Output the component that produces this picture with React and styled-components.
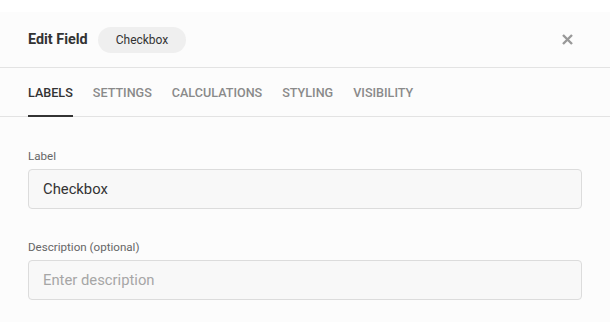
import React from "react";
import styled, { createGlobalStyle } from "styled-components";

const Global = createGlobalStyle`
  html, body { margin: 0; padding: 0; background: #ffffff; }
  body { font-family: Roboto, "Noto Sans", Arial, sans-serif; }
  * { box-sizing: border-box; }
`;

const Dialog = styled.div`
  margin-top: 12px;
  height: 310px;
  background: #fcfcfc;
  display: flex;
  flex-direction: column;
  & > * { flex-shrink: 0; }
`;

const Header = styled.div`
  height: 56px;
  display: flex;
  align-items: center;
  padding: 0 28px;
  border-bottom: 1px solid #e3e3e3;
  gap: 10px;
`;

const Title = styled.h2`
  margin: 0;
  font-size: 14.4px;
  font-weight: 700;
  color: #333;
`;

const Pill = styled.span`
  display: inline-flex;
  align-items: center;
  height: 26px;
  padding: 0 18px;
  border-radius: 13px;
  background: #efefef;
  font-size: 12px;
  color: #333;
`;

const Close = styled.button`
  margin-left: auto;
  width: 30px;
  height: 30px;
  border: none;
  background: transparent;
  display: flex;
  align-items: center;
  justify-content: center;
  padding: 0;
  cursor: pointer;
`;

const Tabs = styled.div`
  display: flex;
  gap: 20px;
  padding: 0 28px;
  border-bottom: 1px solid #e3e3e3;
`;

const Tab = styled.div`
  height: 49px;
  display: flex;
  align-items: center;
  font-size: 12.6px;
  font-weight: 500;
  text-transform: uppercase;
  color: ${(p) => (p.$active ? "#333" : "#8a8a8a")};
  border-bottom: 2px solid ${(p) => (p.$active ? "#333" : "transparent")};
  margin-bottom: -1px;
  padding-top: 2px;
`;

const Content = styled.div`
  padding: 31px 28px 30px;
  display: flex;
  flex-direction: column;
  gap: 30px;
`;

const Field = styled.div`
  display: flex;
  flex-direction: column;
  gap: 5px;
`;

const Label = styled.label`
  font-size: 11.6px;
  line-height: 16px;
  color: #666;
`;

const Input = styled.input`
  height: 40px;
  border: 1px solid #dcdcdc;
  border-radius: 4px;
  background: #f8f8f8;
  padding: 0 14px;
  font-family: Roboto, "Noto Sans", Arial, sans-serif;
  font-size: 14.8px;
  color: #333;
  outline: none;
  &::placeholder { color: #a6a6a6; }
`;

export default function App() {
  const tabs = ["Labels", "Settings", "Calculations", "Styling", "Visibility"];
  return (
    <>
      <Global />
      <Dialog>
        <Header>
          <Title>Edit Field</Title>
          <Pill>Checkbox</Pill>
          <Close aria-label="Close">
            <svg width="11" height="11" viewBox="0 0 11 11">
              <path d="M1 1L10 10M10 1L1 10" stroke="#999" strokeWidth="2.4" strokeLinecap="butt" />
            </svg>
          </Close>
        </Header>
        <Tabs>
          {tabs.map((t, i) => (
            <Tab key={t} $active={i === 0}>{t}</Tab>
          ))}
        </Tabs>
        <Content>
          <Field>
            <Label>Label</Label>
            <Input defaultValue="Checkbox" />
          </Field>
          <Field>
            <Label>Description (optional)</Label>
            <Input placeholder="Enter description" />
          </Field>
        </Content>
      </Dialog>
    </>
  );
}
